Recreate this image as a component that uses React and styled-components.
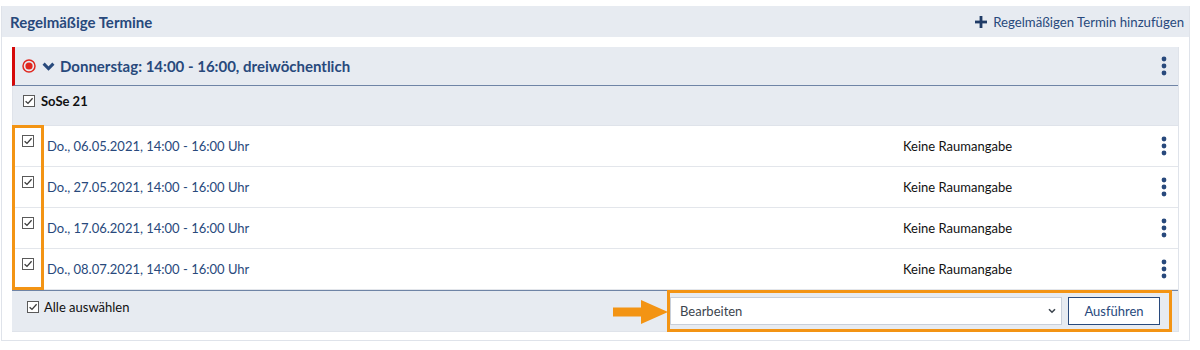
import styled, { createGlobalStyle } from 'styled-components'

const BLUE = '#28497c'
const LIGHT = '#e7ebf1'
const LINE = '#6f84a6'

const dates = [
  'Do., 06.05.2021, 14:00 - 16:00 Uhr',
  'Do., 27.05.2021, 14:00 - 16:00 Uhr',
  'Do., 17.06.2021, 14:00 - 16:00 Uhr',
  'Do., 08.07.2021, 14:00 - 16:00 Uhr',
]

function CheckBox({ size = 12 }) {
  return (
    <svg width={size} height={size} viewBox="0 0 12 12">
      <rect x="0.5" y="0.5" width="11" height="11" fill="#fff" stroke="#5a5a5a" strokeWidth="1" />
      <path d="M2.6 6.2 L5 8.4 L9.6 3.2" fill="none" stroke="#3a3a3a" strokeWidth="1.3" />
    </svg>
  )
}

function Dots() {
  return (
    <svg width="6" height="20" viewBox="0 0 6 20">
      <circle cx="3" cy="3" r="2.4" fill={BLUE} />
      <circle cx="3" cy="10" r="2.4" fill={BLUE} />
      <circle cx="3" cy="17" r="2.4" fill={BLUE} />
    </svg>
  )
}

function App() {
  return (
    <>
      <GlobalStyle />
      <Panel>
        <PanelHeader>
          <PanelTitle>Regelmäßige Termine</PanelTitle>
          <AddLink>
            <svg width="12" height="12" viewBox="0 0 12 12">
              <rect x="4.6" y="0" width="2.8" height="12" fill="#1f3b66" />
              <rect x="0" y="4.6" width="12" height="2.8" fill="#1f3b66" />
            </svg>
            Regelmäßigen Termin hinzufügen
          </AddLink>
        </PanelHeader>
        <PanelBody>
          <Section>
            <SectionHeader>
              <TitleGroup>
                <svg width="14" height="14" viewBox="0 0 14 14">
                  <circle cx="7" cy="7" r="6" fill="none" stroke="#e0271f" strokeWidth="1.5" />
                  <circle cx="7" cy="7" r="3.6" fill="#e0271f" />
                </svg>
                <Chevron width="13" height="9" viewBox="0 0 13 9">
                  <path d="M1.6 1.6 L6.5 6.6 L11.4 1.6" fill="none" stroke={BLUE} strokeWidth="3" />
                </Chevron>
                <SectionTitle>Donnerstag: 14:00 - 16:00, dreiwöchentlich</SectionTitle>
              </TitleGroup>
              <Dots />
            </SectionHeader>
            <SemesterRow>
              <CheckBox />
              <SemesterLabel>SoSe 21</SemesterLabel>
            </SemesterRow>
            <DateList>
              {dates.map((d) => (
                <DateRow key={d}>
                  <CheckCell>
                    <CheckBox />
                  </CheckCell>
                  <DateLink>{d}</DateLink>
                  <Room>Keine Raumangabe</Room>
                  <ActionCell>
                    <Dots />
                  </ActionCell>
                </DateRow>
              ))}
              <Highlight />
            </DateList>
            <Footer>
              <SelectAll>
                <CheckBox />
                Alle auswählen
              </SelectAll>
              <ActionGroup>
                <Arrow width="56" height="24" viewBox="0 0 56 24">
                  <rect x="0" y="7.5" width="30" height="9" fill="#f39414" />
                  <path d="M28 0 L55 12 L28 24 Z" fill="#f39414" />
                </Arrow>
                <ActionBox>
                  <SelectBox>
                    Bearbeiten
                    <svg width="8" height="6" viewBox="0 0 8 6">
                      <path d="M1 1.2 L4 4.2 L7 1.2" fill="none" stroke="#3c454e" strokeWidth="1.6" />
                    </svg>
                  </SelectBox>
                  <Button>Ausführen</Button>
                </ActionBox>
              </ActionGroup>
            </Footer>
          </Section>
        </PanelBody>
      </Panel>
    </>
  )
}
export default App

const GlobalStyle = createGlobalStyle`
  body {
    margin: 0;
    padding: 6px 0 0 1px;
    background: #fff;
    font-family: Lato, "Open Sans", sans-serif;
    font-size: 13px;
    color: #1f1f1f;
  }
`

const Panel = styled.div`
  width: 1187px;
  border: 1px solid #dfe3ea;
  border-top: none;
  padding-bottom: 8px;
`

const PanelHeader = styled.div`
  display: flex;
  align-items: center;
  justify-content: space-between;
  height: 31px;
  background: ${LIGHT};
  padding: 0 5px 0 8px;
`

const PanelTitle = styled.h2`
  margin: 0;
  font-size: 15px;
  font-weight: bold;
  color: ${BLUE};
`

const AddLink = styled.a`
  display: flex;
  align-items: center;
  gap: 6px;
  font-size: 13.2px;
  color: ${BLUE};
`

const PanelBody = styled.div`
  padding: 10px 10px 0 10px;
`

const Section = styled.section`
  border-right: 1px solid #dfe3ea;
  border-bottom: 1px solid #dfe3ea;
`

const SectionHeader = styled.div`
  display: flex;
  align-items: center;
  justify-content: space-between;
  height: 38px;
  background: ${LIGHT};
  border-left: 3px solid #d60a0a;
  border-bottom: 1px solid ${LINE};
  padding: 0 11px 0 7px;
`

const TitleGroup = styled.div`
  display: flex;
  align-items: center;
  gap: 5px;
`

const Chevron = styled.svg`
  margin-left: 1px;
`

const SectionTitle = styled.span`
  font-size: 15px;
  font-weight: bold;
  color: ${BLUE};
`

const SemesterRow = styled.div`
  display: flex;
  align-items: center;
  gap: 6px;
  height: 40px;
  background: ${LIGHT};
  padding: 0 0 10px 10px;
  box-sizing: border-box;
  border-bottom: 1px solid #dfe3ea;
  border-left: 1px solid #dfe3ea;
`

const SemesterLabel = styled.span`
  font-weight: bold;
  font-size: 13px;
  color: #111;
`

const DateList = styled.div`
  position: relative;
`

const DateRow = styled.div`
  display: grid;
  grid-template-columns: 34px 1fr 247px 28px;
  align-items: center;
  height: 40px;
  border-bottom: 1px solid #e3e6eb;
  border-left: 1px solid #dfe3ea;
  background: #fff;

  &:last-of-type {
    border-bottom: none;
  }
`

const CheckCell = styled.div`
  align-self: start;
  padding: 8px 0 0 9px;
`

const DateLink = styled.a`
  color: ${BLUE};
  font-size: 13px;
`

const Room = styled.span`
  font-size: 13px;
  color: #111;
`

const ActionCell = styled.div`
  display: flex;
  justify-content: center;
`

const Highlight = styled.div`
  position: absolute;
  left: 0;
  top: -1px;
  width: 26px;
  height: 159px;
  border: 3px solid #f39414;
  pointer-events: none;
`

const Footer = styled.div`
  display: flex;
  justify-content: space-between;
  align-items: flex-start;
  height: 40px;
  background: ${LIGHT};
  border-top: 1px solid ${LINE};
  padding: 0 6px 0 15px;
`

const SelectAll = styled.label`
  display: flex;
  align-items: center;
  gap: 5px;
  padding-top: 8px;
  font-size: 13px;
  color: #111;
`

const ActionGroup = styled.div`
  display: flex;
  align-items: center;
  margin-top: -1px;
`

const Arrow = styled.svg`
  margin-right: -2px;
  margin-top: 2px;
`

const ActionBox = styled.div`
  display: flex;
  align-items: center;
  gap: 6px;
  height: 36px;
  width: 499px;
  border: 3px solid #f39414;
`

const SelectBox = styled.div`
  display: flex;
  align-items: center;
  justify-content: space-between;
  width: 392px;
  height: 28px;
  box-sizing: border-box;
  border: 1px solid #c8cfda;
  background: #fff;
  padding: 0 5px 0 9px;
  font-size: 13px;
  color: #3c454e;
`

const Button = styled.button`
  width: 92px;
  height: 28px;
  border: 1px solid ${BLUE};
  background: #fff;
  font-family: inherit;
  font-size: 13px;
  color: ${BLUE};
  padding: 0;
`
